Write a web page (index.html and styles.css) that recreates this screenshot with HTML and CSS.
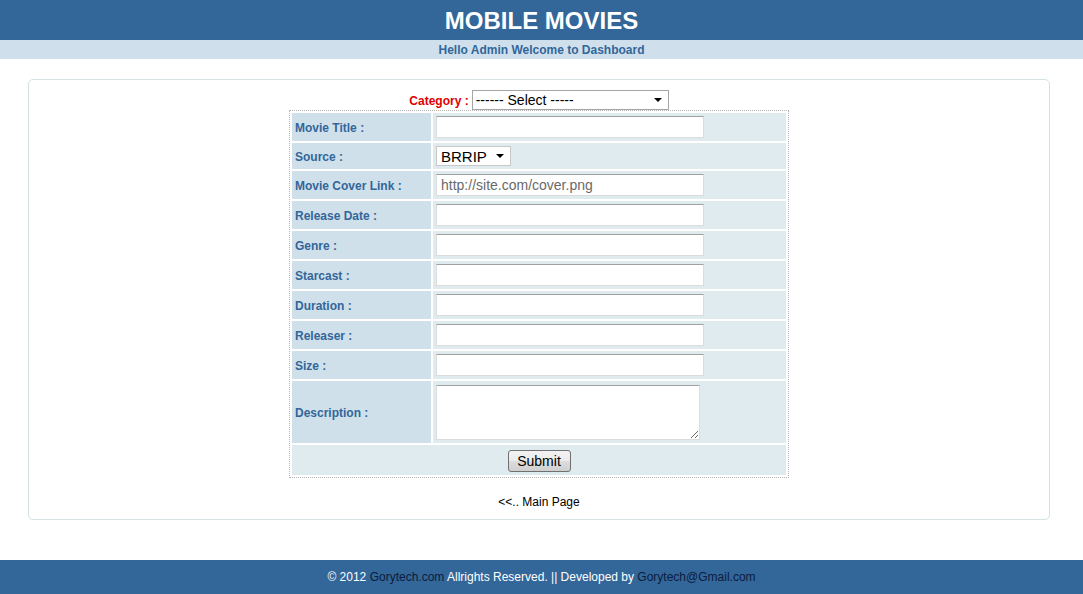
FILE: index.html
```html
<!DOCTYPE html>
<html lang="en">

<head>
    <meta charset="UTF-8">
    <title>Mobile Movies - Admin</title>
    <link rel="stylesheet" href="styles.css">
</head>

<body>
    <div class="header">
        <h1>MOBILE MOVIES</h1>
    </div>
    <div class="welcome">Hello Admin Welcome to Dashboard</div>

    <div class="content">
        <form class="movie-form">
            <div class="category">
                <label for="category">Category :</label>
                <select id="category" class="select-category">
                    <option>------ Select -----</option>
                </select>
            </div>

            <table class="form-table">
                <tr>
                    <td class="label">Movie Title :</td>
                    <td class="field"><input type="text"></td>
                </tr>
                <tr>
                    <td class="label">Source :</td>
                    <td class="field">
                        <select class="select-source">
                            <option>BRRIP</option>
                            <option>DVDRIP</option>
                            <option>CAM</option>
                        </select>
                    </td>
                </tr>
                <tr>
                    <td class="label">Movie Cover Link :</td>
                    <td class="field"><input type="text" placeholder="http://site.com/cover.png"></td>
                </tr>
                <tr>
                    <td class="label">Release Date :</td>
                    <td class="field"><input type="text"></td>
                </tr>
                <tr>
                    <td class="label">Genre :</td>
                    <td class="field"><input type="text"></td>
                </tr>
                <tr>
                    <td class="label">Starcast :</td>
                    <td class="field"><input type="text"></td>
                </tr>
                <tr>
                    <td class="label">Duration :</td>
                    <td class="field"><input type="text"></td>
                </tr>
                <tr>
                    <td class="label">Releaser :</td>
                    <td class="field"><input type="text"></td>
                </tr>
                <tr>
                    <td class="label">Size :</td>
                    <td class="field"><input type="text"></td>
                </tr>
                <tr>
                    <td class="label">Description :</td>
                    <td class="field"><textarea></textarea></td>
                </tr>
                <tr>
                    <td class="submit-row" colspan="2"><button type="button">Submit</button></td>
                </tr>
            </table>
        </form>

        <p class="back"><a href="#">&lt;&lt;.. Main Page</a></p>
    </div>

    <div class="footer">
        &copy; 2012 <a href="#">Gorytech.com</a> Allrights Reserved. || Developed by <a href="#">Gorytech@Gmail.com</a>
    </div>
</body>

</html>
```

FILE: styles.css
```css
* {
    padding: 0;
    margin: 0;
    font-family: 'Liberation Sans', Arial, Helvetica, sans-serif;
}

body {
    background: #fff;
    font-size: 12px;
}

.header {
    background: #336699;
    height: 40px;
    text-align: center;
}

h1 {
    color: #fff;
    font-size: 24px;
    font-weight: bold;
    line-height: 41px;
}

.welcome {
    background: #cfe0ec;
    color: #336699;
    font-weight: bold;
    height: 19px;
    line-height: 20px;
    text-align: center;
}

.content {
    margin: 20px 33px 0 28px;
    border: 1px solid #d3e3e3;
    border-radius: 5px;
    padding: 10px 0 10px;
}

.category {
    display: flex;
    justify-content: center;
    align-items: center;
    gap: 3px;
}

.category label {
    color: #e00000;
    font-weight: bold;
    padding-top: 2px;
}

select {
    appearance: none;
    -webkit-appearance: none;
    background: #fff url("data:image/svg+xml,%3Csvg xmlns='http://www.w3.org/2000/svg' width='8' height='4'%3E%3Cpath d='M0 0h8L4 4z' fill='%23000'/%3E%3C/svg%3E") no-repeat right 6px center;
    border: 1px solid #a5a5a5;
    font-size: 14px;
    color: #000;
    height: 20px;
    padding: 0 3px;
}

.select-category {
    width: 197px;
}

.select-source {
    width: 75px;
    font-size: 15px;
    padding-left: 4px;
    border-color: #c8c8c8;
    margin: 0;
    display: block;
}

.form-table {
    margin: 0 auto;
    width: 500px;
    border: 1px dotted #b5b5b5;
    border-spacing: 2px;
}

.form-table td {
    padding: 3px;
}

.label {
    width: 133px;
    background: #cfe0eb;
    color: #336699;
    font-weight: bold;
    vertical-align: middle;
    padding-top: 4px !important;
}

.field {
    background: #e0ebf0;
}

input[type=text] {
    display: block;
    width: 268px;
    height: 22px;
    border: 1px solid #dcdcdc;
    border-top-color: #a0a0a0;
    background: #fff;
    font-size: 14px;
    padding: 0 4px;
    box-sizing: border-box;
}

input::placeholder {
    color: #6a6a6a;
}

textarea {
    display: block;
    width: 264px;
    height: 55px;
    margin-top: 1px;
    border: 1px solid #dcdcdc;
    border-top-color: #a0a0a0;
    box-sizing: border-box;
    resize: both;
}

.submit-row {
    background: #e0ebf0;
    text-align: center;
    height: 23px;
    padding-top: 4px !important;
}

button {
    width: 63px;
    height: 22px;
    font-size: 14px;
    color: #000;
    border: 1px solid #707070;
    border-radius: 3px;
    background: linear-gradient(#f2f2f2, #ebebeb 50%, #dddddd 51%, #cfcfcf);
}

.back {
    text-align: center;
    margin-top: 17px;
    line-height: 14px;
}

.back a {
    color: #000;
    text-decoration: none;
}

.footer {
    margin-top: 40px;
    background: #336699;
    color: #fff;
    height: 34px;
    line-height: 35px;
    text-align: center;
}

.footer a {
    color: #0b1c3c;
    text-decoration: none;
}
```
